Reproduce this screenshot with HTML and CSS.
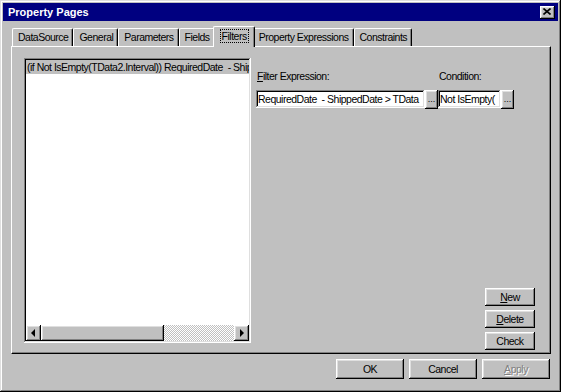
FILE: index.html
```html
<!DOCTYPE html>
<html>
<head>
    <title>Property Pages</title>
    <meta http-equiv="Content-Type" content="text/html; charset=utf-8">
    <link rel="stylesheet" href="styles.css">
</head>
<body>

<div class="window">
    <div class="titlebar">
        <span class="title">Property Pages</span>
        <button class="close">
            <svg width="8" height="7" viewBox="0 0 8 7"><path d="M0.5 0.5 L7.5 6.5 M7.5 0.5 L0.5 6.5" stroke="#000" stroke-width="1.6" fill="none"/></svg>
        </button>
    </div>

    <div class="content">
        <div class="tabs">
            <div class="tab">DataSource</div>
            <div class="tab">General</div>
            <div class="tab">Parameters</div>
            <div class="tab">Fields</div>
            <div class="tab active"><span class="focus">Filters</span></div>
            <div class="tab">Property Expressions</div>
            <div class="tab">Constraints</div>
        </div>

        <div class="panel">
            <div class="listbox">
                <div class="items">
                    <div class="item selected">(if Not IsEmpty(TData2.Interval)) RequiredDate  - ShippedDate &gt; TData2.Interval</div>
                </div>
                <div class="hscroll">
                    <button class="arrow left"></button>
                    <div class="track"><div class="thumb"></div></div>
                    <button class="arrow right"></button>
                </div>
            </div>

            <div class="editor">
                <div class="fields">
                    <div class="field filter">
                        <label><u>F</u>ilter Expression:</label>
                        <div class="input-row">
                            <div class="textbox"><span class="clip">RequiredDate  - ShippedDate &gt; TData</span></div>
                            <button class="dots">...</button>
                        </div>
                    </div>
                    <div class="field condition">
                        <label>Condition:</label>
                        <div class="input-row">
                            <div class="textbox"><span class="clip">Not IsEmpty(</span></div>
                            <button class="dots">...</button>
                        </div>
                    </div>
                </div>

                <div class="side-buttons">
                    <button class="btn"><u>N</u>ew</button>
                    <button class="btn"><u>D</u>elete</button>
                    <button class="btn">Check</button>
                </div>
            </div>
        </div>

        <div class="footer">
            <button class="btn wide">OK</button>
            <button class="btn wide">Cancel</button>
            <button class="btn wide disabled"><u>A</u>pply</button>
        </div>
    </div>
</div>

</body>
</html>
```

FILE: styles.css
```css
* {
    box-sizing: border-box;
}

body, html {
    margin: 0;
    padding: 0;
    background-color: #c0c0c0;
    font-family: "Liberation Sans", Arial, sans-serif;
    font-size: 10.5px;
    letter-spacing: -0.5px;
    color: #000;
}

button {
    font-family: inherit;
    font-size: inherit;
    letter-spacing: inherit;
    color: inherit;
    margin: 0;
    padding: 0;
    border: none;
    background-color: #c0c0c0;
}

/* bordas 3D no estilo classico */
.btn, .close, .dots, .arrow, .thumb {
    box-shadow: inset -1px -1px #000, inset 1px 1px #fff, inset -2px -2px #808080, inset 2px 2px #dfdfdf;
}

.window {
    width: 561px;
    height: 392px;
    padding: 3px;
    display: flex;
    flex-direction: column;
    background-color: #c0c0c0;
    box-shadow: inset -1px -1px #000, inset 1px 1px #dfdfdf, inset -2px -2px #808080, inset 2px 2px #fff;
}

.titlebar {
    height: 18px;
    display: flex;
    align-items: center;
    justify-content: space-between;
    padding: 0 3px 0 5px;
    background-color: #000080;
    color: #fff;
}

.title {
    font-weight: bold;
    font-size: 11px;
    letter-spacing: 0;
}

.close {
    width: 15px;
    height: 13px;
    display: flex;
    align-items: center;
    justify-content: center;
    padding: 0 1px 1px 0;
}

.close svg {
    display: block;
}

.content {
    flex: 1;
    padding: 7px 7px 0 8px;
    display: flex;
    flex-direction: column;
}

.tabs {
    display: flex;
    align-items: flex-end;
    height: 18px;
    padding-left: 1px;
}

.tab {
    height: 18px;
    padding: 0 4px 0 5px;
    line-height: 16px;
    border-top: 1px solid #fff;
    border-left: 1px solid #fff;
    border-right: 1px solid #000;
    border-top-left-radius: 2px;
    border-top-right-radius: 2px;
    box-shadow: inset -1px 0 #808080;
    white-space: nowrap;
}

.tab.active {
    position: relative;
    z-index: 1;
    height: 21px;
    margin: 0 -2px -1px -2px;
    padding: 0 6px 0 7px;
    line-height: 18px;
    background-color: #c0c0c0;
}

.focus {
    outline: 1px dotted #000;
    padding: 0 1px;
}

.panel {
    width: 540px;
    height: 308px;
    display: flex;
    padding: 11px 15px 3px 12px;
    border-top: 1px solid #fff;
    border-left: 1px solid #fff;
    border-right: 1px solid #000;
    border-bottom: 1px solid #000;
    box-shadow: inset -1px -1px #808080;
}

.listbox {
    width: 227px;
    height: 285px;
    flex: none;
    padding: 2px;
    display: flex;
    flex-direction: column;
    background-color: #fff;
    box-shadow: inset -1px -1px #fff, inset 1px 1px #808080, inset -2px -2px #dfdfdf, inset 2px 2px #000;
}

.items {
    flex: 1;
    overflow: hidden;
}

.item {
    height: 14px;
    line-height: 14px;
    padding-left: 1px;
    white-space: pre;
}

.item.selected {
    background-color: #c0c0c0;
}

.hscroll {
    height: 16px;
    display: flex;
}

.arrow {
    width: 15px;
    height: 16px;
    flex: none;
    display: flex;
    align-items: center;
    justify-content: center;
}

.arrow::before {
    content: "";
    border-top: 4px solid transparent;
    border-bottom: 4px solid transparent;
}

.arrow.left::before {
    border-right: 4px solid #000;
    margin-right: 1px;
}

.arrow.right::before {
    border-left: 4px solid #000;
    margin-left: 1px;
}

.track {
    flex: 1;
    background: repeating-conic-gradient(#c0c0c0 0 25%, #fff 0 50%) 0 0 / 2px 2px;
}

.thumb {
    width: 123px;
    height: 16px;
    background-color: #c0c0c0;
}

.editor {
    flex: 1;
    display: flex;
    flex-direction: column;
    padding-left: 5px;
}

.fields {
    display: flex;
    margin-top: 12px;
}

.field label {
    display: block;
    height: 13px;
    line-height: 13px;
    padding-left: 1px;
    margin-bottom: 7px;
}

.input-row {
    display: flex;
}

.textbox {
    height: 18px;
    line-height: 18px;
    padding: 0 2px;
    overflow: hidden;
    background-color: #fff;
    box-shadow: inset -1px -1px #fff, inset 1px 1px #808080, inset -2px -2px #dfdfdf, inset 2px 2px #000;
}

.clip {
    white-space: pre;
}

.filter .textbox {
    width: 169px;
}

.condition .textbox {
    width: 63px;
}

.dots {
    width: 13px;
    height: 19px;
    line-height: 19px;
    font-size: 9px;
    letter-spacing: 0;
    overflow: hidden;
}

.side-buttons {
    margin-top: auto;
    display: flex;
    flex-direction: column;
    align-items: flex-end;
    gap: 4px;
}

.btn {
    width: 50px;
    height: 18px;
}

.footer {
    display: flex;
    justify-content: flex-end;
    gap: 5px;
    margin-top: 5px;
    padding-right: 1px;
}

.btn.wide {
    width: 68px;
    height: 20px;
}

.btn.disabled {
    color: #808080;
    text-shadow: 1px 1px #fff;
}
```
